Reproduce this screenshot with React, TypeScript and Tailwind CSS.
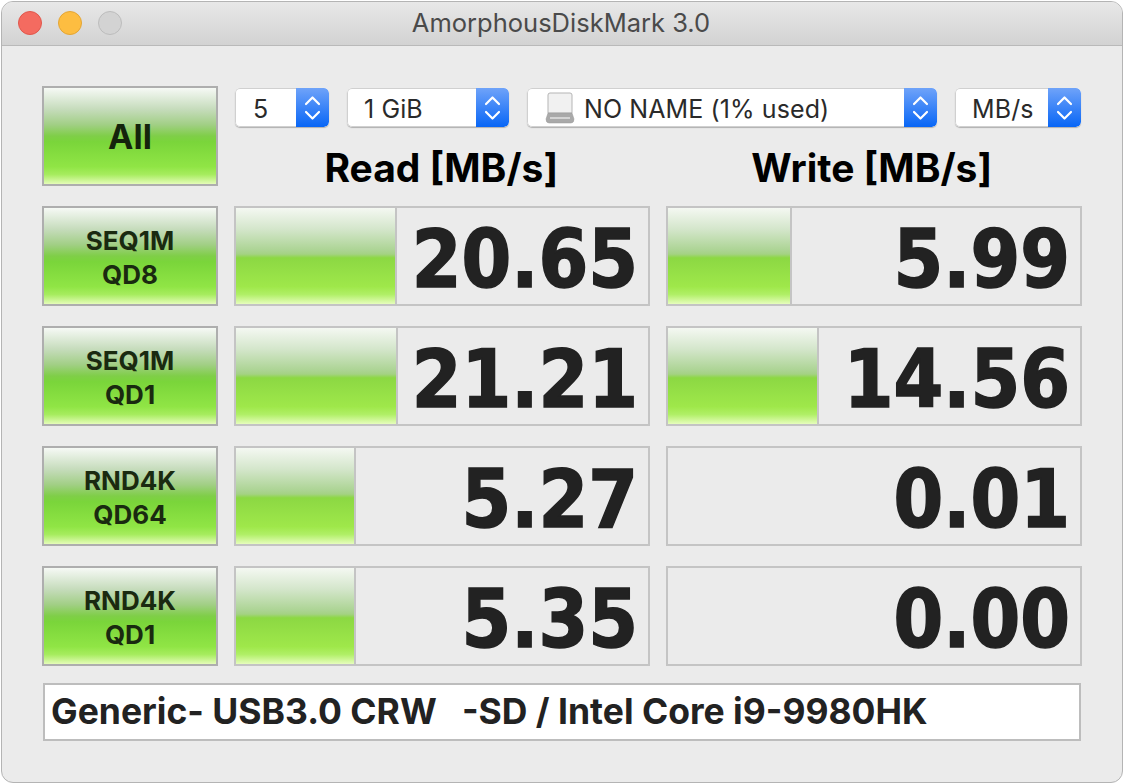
import React from 'react'

const btnGrad = 'bg-[linear-gradient(180deg,#f6f9f5_0%,#c6dcbc_22%,#a2cf86_38%,#7fce48_50%,#7ad53a_56%,#90e545_82%,#a6ec5e_90%,#e4fcb8_100%)]'
const barGrad = 'bg-[linear-gradient(180deg,#f4f8f2_0%,#d4e6cb_22%,#acd494_44%,#a4d284_48%,#8cd843_52%,#9fe84a_82%,#b0ef66_90%,#e6fdbc_100%)]'

interface IRow {
  line1: string;
  line2: string;
  read: string;
  readBar: number;
  write: string;
  writeBar: number;
}

const rows: IRow[] = [
  { line1: 'SEQ1M', line2: 'QD8', read: '20.65', readBar: 161, write: '5.99', writeBar: 124 },
  { line1: 'SEQ1M', line2: 'QD1', read: '21.21', readBar: 162, write: '14.56', writeBar: 151 },
  { line1: 'RND4K', line2: 'QD64', read: '5.27', readBar: 120, write: '0.01', writeBar: 0 },
  { line1: 'RND4K', line2: 'QD1', read: '5.35', readBar: 120, write: '0.00', writeBar: 0 },
]

const Stepper: React.FC = () => (
  <div className="w-[33px] h-full rounded-r-[5px] bg-[linear-gradient(180deg,#6fa3f9_0%,#0866f6_100%)] flex items-center justify-center">
    <svg width="17" height="28" viewBox="0 0 17 28" fill="none" stroke="white" strokeWidth="2.2" strokeLinecap="round" strokeLinejoin="round">
      <path d="M2 10 L8.5 3.5 L15 10" />
      <path d="M2 18 L8.5 24.5 L15 18" />
    </svg>
  </div>
)

const DiskIcon: React.FC = () => (
  <svg width="30" height="32" viewBox="0 0 30 32" className="mr-[9px]">
    <path d="M3 3 Q3 1 5 1 H25 Q27 1 27 3 V21 H3 Z" fill="#f1f1f1" stroke="#b5b5b5" strokeWidth="1" />
    <path d="M3 21 H27 L29 27 Q29 31 26 31 H4 Q1 31 1 27 Z" fill="#a9a9a9" stroke="#9a9a9a" strokeWidth="0.5" />
    <rect x="5" y="25" width="20" height="2" fill="#d4d4d4" />
  </svg>
)

const Select: React.FC<{ width: string; pad: string; label: string; icon?: boolean }> = ({ width, pad, label, icon }) => (
  <div className={`${width} h-[39px] flex bg-white rounded-[5px] shadow-[0_1px_1px_#b0b0b0] overflow-hidden`}>
    <div className={`flex-1 flex items-center ${pad} border border-r-0 border-[#d0d0d0] rounded-l-[5px] text-[25px] text-[#2a2a2a] whitespace-nowrap`}>
      {icon && <DiskIcon />}
      <span className="relative top-[2px] tracking-[0.1px]">{label}</span>
    </div>
    <Stepper />
  </div>
)

const Cell: React.FC<{ value: string; bar: number }> = ({ value, bar }) => (
  <div className="relative h-[100px] border-2 border-[#c4c4c4] bg-[#ebebeb] overflow-hidden">
    {bar > 0 && <div className={`absolute left-0 top-0 bottom-0 border-r-2 border-[#c4c4c4] ${barGrad}`} style={{ width: bar }} />}
    <div className="relative h-full flex items-center justify-end pr-[10px] pt-[7px] text-[79.5px] leading-none font-bold text-[#222222] [-webkit-text-stroke:1.5px_#222222] font-['DejaVu_Sans_Condensed','DejaVu_Sans',sans-serif]">
      {value}
    </div>
  </div>
)

const TestButton: React.FC<{ line1: string; line2: string }> = ({ line1, line2 }) => (
  <div className={`h-[100px] border-2 border-[#aeaeae] ${btnGrad} flex flex-col items-center justify-center text-[26px] leading-[34px] font-bold text-[#1a2a10] pt-[3px]`}>
    <div>{line1}</div>
    <div>{line2}</div>
  </div>
)

export default function App() {
  return (
    <div className="w-[1124px] h-[784px] p-px bg-white font-['Inter',Arial,sans-serif]">
      <div className="h-full flex flex-col border border-[#b4b4b4] rounded-[12px] overflow-hidden bg-[#ebebeb]">
        <div className="relative h-[44px] shrink-0 flex items-center justify-center border-b border-[#b9b9b9] bg-[linear-gradient(180deg,#e8e8e8_0%,#d2d2d2_100%)]">
          <div className="absolute left-[16px] top-[9px] flex gap-[16px]">
            <div className="w-[24px] h-[24px] rounded-full bg-[#f46b60] border border-[#e0574c]" />
            <div className="w-[24px] h-[24px] rounded-full bg-[#fdbd41] border border-[#e3a535]" />
            <div className="w-[24px] h-[24px] rounded-full bg-[#d3d3d3] border border-[#bcbcbc]" />
          </div>
          <span className="text-[25.5px] text-[#4a4a4a] mr-[2px]">AmorphousDiskMark 3.0</span>
        </div>

        <div className="flex-1 pl-[40px] pt-[40px]">
          <div className="grid grid-cols-[176px_416px_416px] gap-x-[16px] gap-y-[20px]">
            <div className={`h-[100px] border-2 border-[#aeaeae] ${btnGrad} flex items-center justify-center text-[34px] font-bold text-[#14240c] pt-[1px]`}>
              All
            </div>
            <div className="col-span-2 h-[100px]">
              <div className="flex gap-[18px] pt-[2px] pl-px">
                <Select width="w-[94px]" pad="pl-[17px]" label="5" />
                <Select width="w-[162px]" pad="pl-[16px]" label="1 GiB" />
                <Select width="w-[410px]" pad="pl-[17px]" label="NO NAME (1% used)" icon />
                <Select width="w-[126px]" pad="pl-[16px]" label="MB/s" />
              </div>
              <div className="grid grid-cols-2 gap-x-[16px] mt-[18px] pr-[3px] text-[39px] leading-[46px] font-bold text-black text-center">
                <div>Read [MB/s]</div>
                <div>Write [MB/s]</div>
              </div>
            </div>
            {rows.map((row, i) => (
              <React.Fragment key={i}>
                <TestButton line1={row.line1} line2={row.line2} />
                <Cell value={row.read} bar={row.readBar} />
                <Cell value={row.write} bar={row.writeBar} />
              </React.Fragment>
            ))}
          </div>
          <div className="w-[1038px] h-[58px] ml-px mt-[17px] border-2 border-[#bdbdbd] bg-white flex items-center pl-[6px] text-[35.5px] font-bold text-[#222222] whitespace-pre">
            {'Generic- USB3.0 CRW   -SD / Intel Core i9-9980HK'}
          </div>
        </div>
      </div>
    </div>
  )
}
